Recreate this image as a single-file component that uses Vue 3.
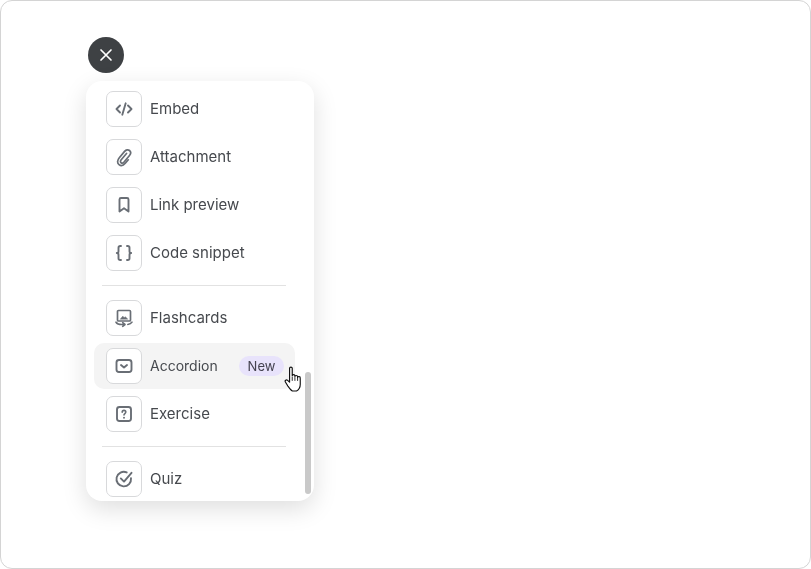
<script setup>
const groups = [
  [
    { label: 'Embed', icon: 'embed' },
    { label: 'Attachment', icon: 'clip' },
    { label: 'Link preview', icon: 'bookmark' },
    { label: 'Code snippet', icon: 'braces' },
  ],
  [
    { label: 'Flashcards', icon: 'cards' },
    { label: 'Accordion', icon: 'accordion', badge: 'New', active: true },
    { label: 'Exercise', icon: 'question' },
  ],
  [{ label: 'Quiz', icon: 'quiz' }],
]
</script>

<template>
  <div class="frame">
    <button class="close" aria-label="Close">
      <svg width="18" height="18" viewBox="0 0 18 18" fill="none" stroke="#fff" stroke-width="1.7" stroke-linecap="round">
        <path d="M4 4l10 10M14 4L4 14" />
      </svg>
    </button>
    <div class="menu">
      <template v-for="(group, gi) in groups" :key="gi">
        <div v-if="gi > 0" class="divider"></div>
        <div class="group">
          <div v-for="item in group" :key="item.label" class="row" :class="{ active: item.active }">
            <span class="box">
              <svg width="20" height="20" viewBox="0 0 20 20" fill="none" stroke="#696e75" stroke-width="1.900" stroke-linecap="round" stroke-linejoin="round">
                <template v-if="item.icon === 'embed'">
                  <path d="M6 6.500L2.500 10 6 13.500M14 6.500l3.500 3.500-3.500 3.500M11.700 4.300l-3.400 11.400" />
                </template>
                <template v-else-if="item.icon === 'clip'">
                  <path d="M12.500 6.500L7 13c-.8 1-.7 2.200.1 2.800.8.600 1.900.4 2.700-.5l5.700-6.800c1.500-1.800 1.400-3.800 0-5-1.400-1.200-3.400-.9-4.900.9l-5.300 6.400c-2.200 2.700-2.200 5.300-.3 6.800 1.900 1.500 4.300 1 6.300-1.300l3-3.500" stroke-width="1.700" />
                </template>
                <template v-else-if="item.icon === 'bookmark'">
                  <path d="M5.500 4.500a1.500 1.500 0 0 1 1.500-1.500h6a1.500 1.500 0 0 1 1.500 1.500V16.500L10 13.300 5.500 16.500z" />
                </template>
                <template v-else-if="item.icon === 'braces'">
                  <path d="M7 3H6.300C5.200 3 4.500 3.800 4.500 4.800v3.400C4.500 9.200 3.800 10 2.800 10c1 0 1.700.8 1.700 1.800v3.400C4.500 16.200 5.200 17 6.300 17H7M13 3h.7c1.100 0 1.800.8 1.800 1.800v3.400c0 1 .7 1.800 1.700 1.800-1 0-1.700.8-1.700 1.800v3.400c0 1-.7 1.800-1.800 1.800H13" />
                </template>
                <template v-else-if="item.icon === 'cards'">
                  <rect x="3.500" y="2.500" width="13" height="10.500" rx="1" stroke-width="1.700" />
                  <path d="M6.500 11l2.300-2.800 1.500 1.500 1-1 2.200 2.300z" fill="#696e75" stroke-width="0.6" />
                  <path d="M2 14.200c1 1.500 3 2.300 5.500 2.300h3.500M8.700 14.700l2.300 1.800-2.300 1.800M18 14.200c-.8 1.300-2.200 2.100-4.200 2.300" stroke-width="1.600" />
                </template>
                <template v-else-if="item.icon === 'accordion'">
                  <rect x="2.500" y="4" width="15" height="12" rx="2.500" />
                  <path d="M7 9l3 2.500L13 9" />
                </template>
                <template v-else-if="item.icon === 'question'">
                  <rect x="3" y="3" width="14" height="14" rx="2.500" />
                  <path d="M8.200 8.200c0-1.100.8-1.800 1.800-1.800s1.800.7 1.800 1.700c0 1.400-1.800 1.500-1.800 2.800" stroke-width="1.600" />
                  <path d="M10 13.600v.1" />
                </template>
                <template v-else>
                  <path d="M17 9.200A7.300 7.300 0 1 1 12.700 3.400" />
                  <path d="M6.800 9.400L10 12.600 17.500 3.800" />
                </template>
              </svg>
            </span>
            <span class="label" :class="{ narrow: item.active }">{{ item.label }}</span>
            <span v-if="item.badge" class="badge">{{ item.badge }}</span>
          </div>
        </div>
      </template>
      <div class="thumb"></div>
      <svg class="cursor" width="18" height="26" viewBox="0 0 15.500 24.500" preserveAspectRatio="none" fill="#fff" stroke="#111" stroke-width="1" stroke-linejoin="round">
        <path d="M4.800 2.200c0-1.500 2.300-1.500 2.300 0v7c0-1.400 2.300-1.400 2.300 0v.8c0-1.300 2.300-1.300 2.300 0v.8c0-1.200 2.200-1.200 2.200 0l.1 1.500v5c0 2.700-1.400 5.300-3.200 6.200H7.200c-1.400-.7-2.800-3-3.900-4.700L1.200 15c-.8-1.300.8-2.500 1.900-1.500l1.700 1.700z" />
        <path d="M7.100 10v4M9.400 10.500v3.500M11.700 11v3" fill="none" stroke-width="0.8" />
      </svg>
    </div>
  </div>
</template>

<style scoped>
.frame {
  box-sizing: border-box;
  width: 811px;
  height: 569px;
  border: 1px solid #d4d4d4;
  border-radius: 12px;
  background: #fff;
  padding: 36px 0 0 85px;
  overflow: hidden;
  font-family: Inter, "Liberation Sans", sans-serif;
}
.close {
  display: flex;
  align-items: center;
  justify-content: center;
  width: 36px;
  height: 36px;
  margin: 0 0 8px 2px;
  padding: 0;
  border: 0;
  border-radius: 50%;
  background: #3e4144;
}
.menu {
  position: relative;
  box-sizing: border-box;
  width: 228px;
  height: 420px;
  padding-top: 5px;
  border-radius: 16px;
  background: #fff;
  box-shadow: 0 8px 24px rgba(0, 0, 0, 0.13);
  overflow: hidden;
  will-change: transform;
}
.group {
  display: flex;
  flex-direction: column;
  gap: 2px;
}
.row {
  display: flex;
  align-items: center;
  gap: 8px;
  box-sizing: border-box;
  width: 201px;
  height: 46px;
  margin-left: 8px;
  padding: 0 11px 0 12px;
  border-radius: 10px;
  color: #46494e;
  font-size: 15px;
}
.row.active {
  background: #f4f4f4;
}
.box {
  display: flex;
  align-items: center;
  justify-content: center;
  box-sizing: border-box;
  width: 36px;
  height: 36px;
  flex: none;
  border: 1px solid #d8d9db;
  border-radius: 7px;
  background: #fff;
}
.label {
  flex: 1;
  margin-bottom: 2px;
}
.label.narrow {
  font-size: 14px;
}
.badge {
  display: flex;
  align-items: center;
  justify-content: center;
  width: 45px;
  height: 20px;
  border-radius: 10px;
  background: #e8e3fb;
  color: #44424f;
  font-size: 13px;
}
.divider {
  height: 1px;
  width: 184px;
  margin: 9px 0 9px 16px;
  background: #e2e2e2;
}
.thumb {
  position: absolute;
  left: 219px;
  top: 291px;
  width: 6px;
  height: 122px;
  border-radius: 3px;
  background: #c9c9c9;
}
.cursor {
  position: absolute;
  left: 198px;
  top: 285px;
}
</style>
